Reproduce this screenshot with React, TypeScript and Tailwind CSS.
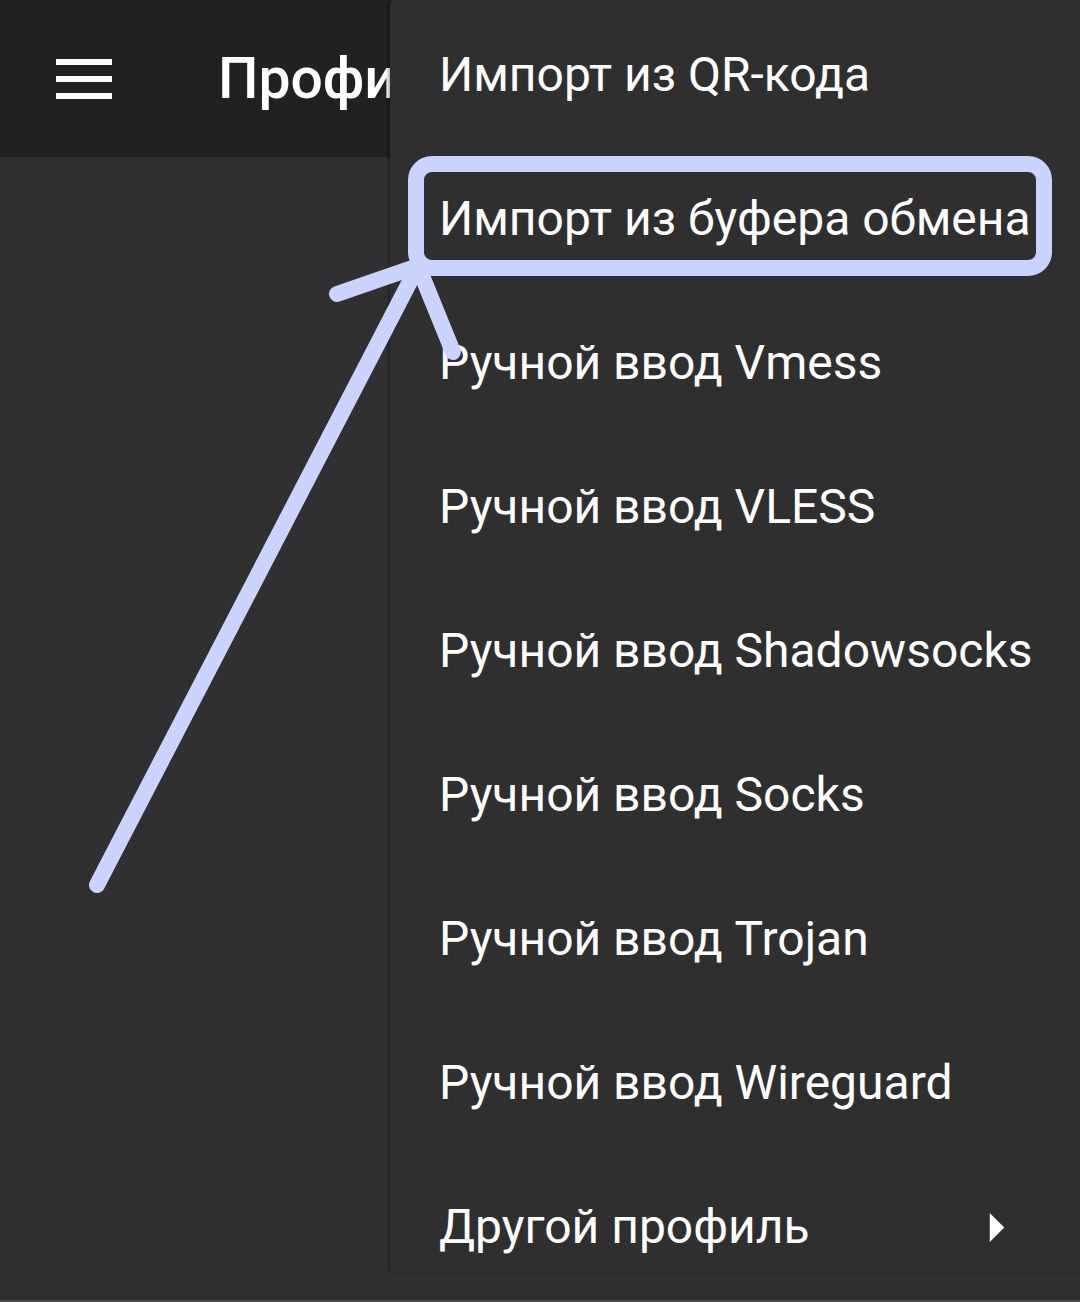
import React from 'react';

const items = [
  'Импорт из QR-кода',
  'Импорт из буфера обмена',
  'Ручной ввод Vmess',
  'Ручной ввод VLESS',
  'Ручной ввод Shadowsocks',
  'Ручной ввод Socks',
  'Ручной ввод Trojan',
  'Ручной ввод Wireguard',
];

function App() {
  return (
    <div
      className="relative flex w-[1080px] h-[1302px] flex-col overflow-hidden bg-[#303030] text-white"
      style={{ fontFamily: 'Roboto, "Noto Sans", sans-serif' }}
    >
      {/* Toolbar */}
      <div className="flex h-[157px] shrink-0 items-center bg-[#212121]">
        <div className="ml-[56px] flex w-[56px] flex-col gap-[11px]">
          <span className="block h-[6px] bg-white" />
          <span className="block h-[6px] bg-white" />
          <span className="block h-[6px] bg-white" />
        </div>
        <h1 className="ml-[106px] text-[57px] font-medium leading-none">Профили</h1>
      </div>
      <div className="flex-1" />
      <div className="h-[2px] bg-[#4a4a4a]" />

      {/* Popup menu */}
      <div className="absolute right-0 top-0 h-[1272px] w-[690px] rounded-tl-[4px] bg-[#2f2f2f] pt-[3px] shadow-[-2px_0_3px_rgba(0,0,0,0.3)]">
        {items.map((label) => (
          <div key={label} className="flex h-[144px] items-center pl-[49px] text-[48px] leading-none">
            {label}
          </div>
        ))}
        <div className="flex h-[144px] items-center justify-between pl-[49px] pr-[75px] text-[48px] leading-none">
          <span>Другой профиль</span>
          <svg width="16" height="29" viewBox="0 0 5 10" fill="white">
            <path d="M0 0l5 5-5 5z" />
          </svg>
        </div>
      </div>

      {/* Annotation */}
      <svg className="pointer-events-none absolute inset-0" width="1080" height="1302" viewBox="0 0 1080 1302">
        <g fill="none" stroke="#cad4ff" strokeWidth="16" strokeLinecap="round" strokeLinejoin="round">
          <rect x="416" y="164" width="628" height="104" rx="16" />
          <path d="M97 885L418 266" />
          <path d="M337 294L418 266L453 352" />
        </g>
      </svg>
    </div>
  );
}

export default App;
